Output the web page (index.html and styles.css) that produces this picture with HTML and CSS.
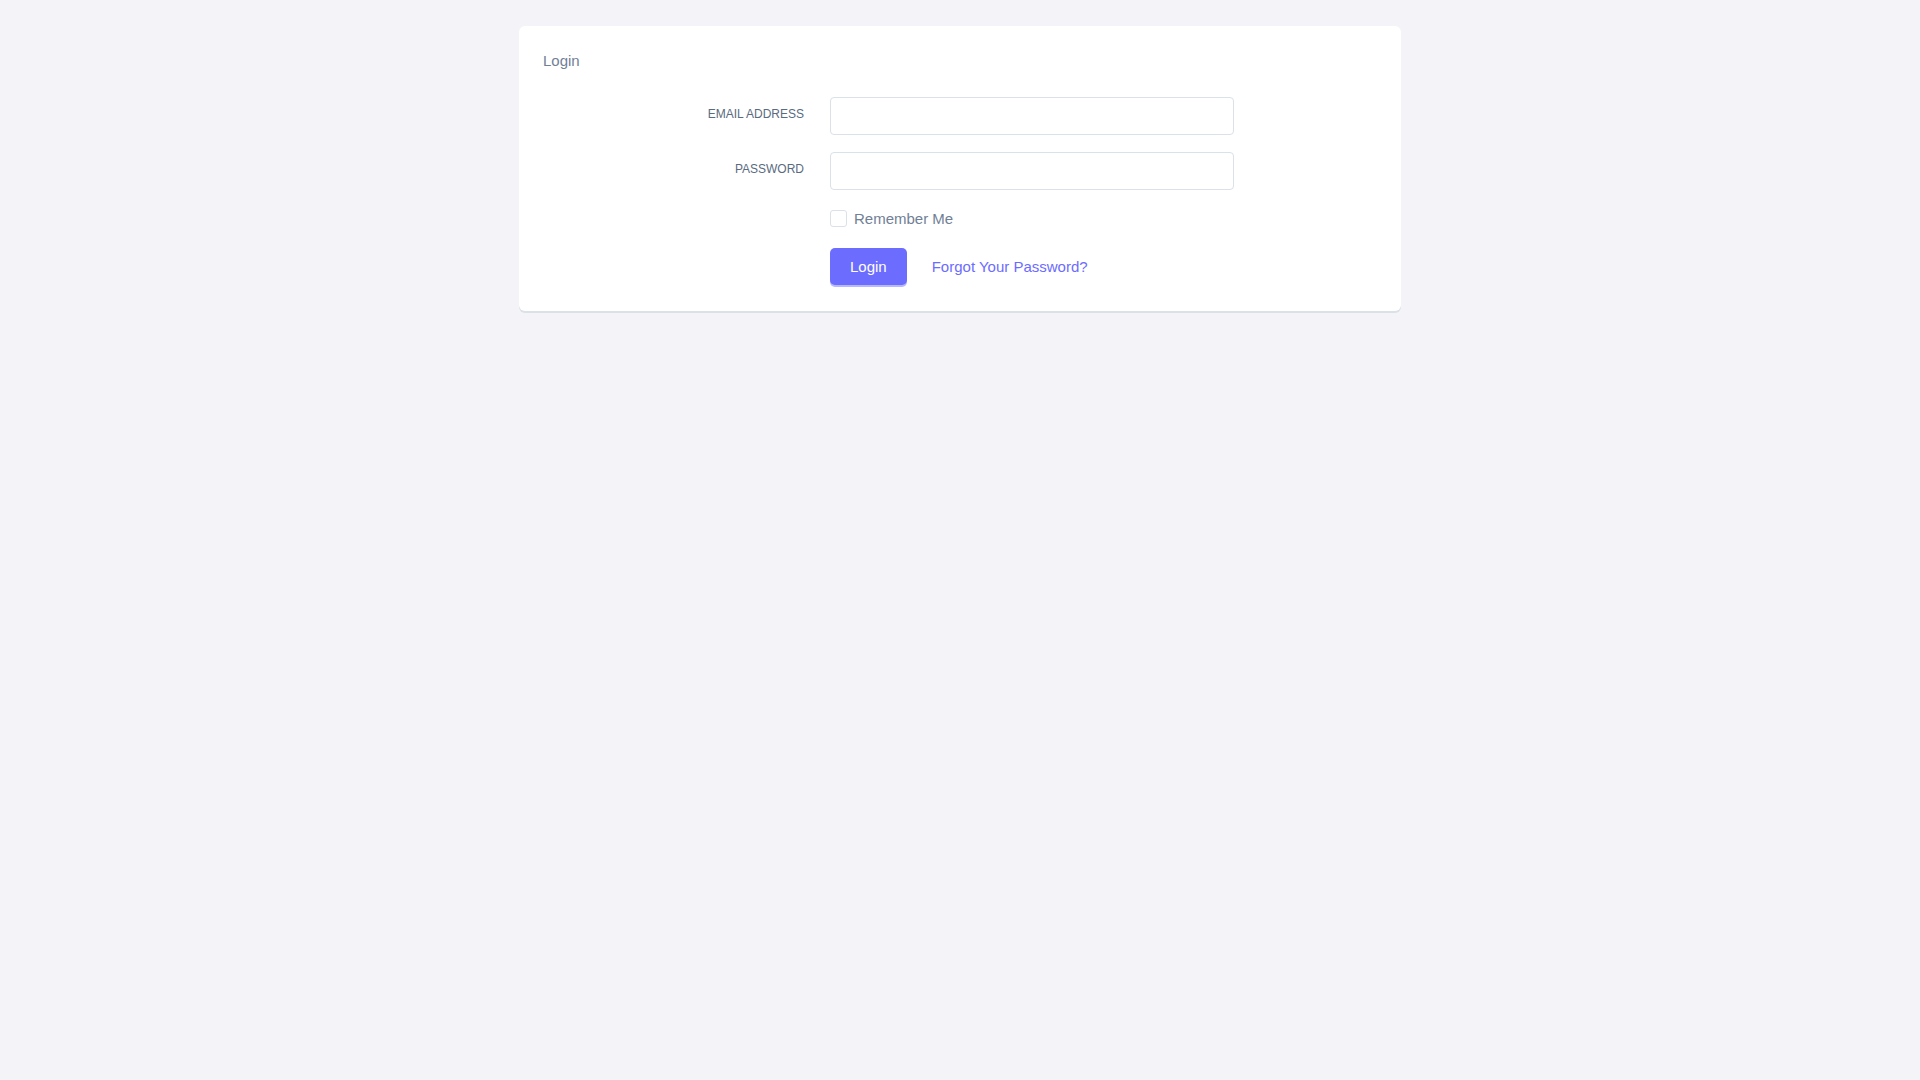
FILE: index.html
```html
<!DOCTYPE html>
<html lang="en">
<head>
<meta charset="utf-8">
<title>Login</title>
<link rel="stylesheet" href="styles.css">
</head>
<body>
<div class="card">
  <div class="card-header">Login</div>
  <form class="login-form">
    <div class="form-row field-row">
      <label class="field-label" for="email">Email Address</label>
      <input class="field-input" id="email" type="email">
    </div>
    <div class="form-row field-row">
      <label class="field-label" for="password">Password</label>
      <input class="field-input" id="password" type="password">
    </div>
    <div class="form-row check-row">
      <label class="remember">
        <span class="checkbox"></span>
        <span class="remember-text">Remember Me</span>
      </label>
    </div>
    <div class="form-row action-row">
      <div class="actions">
        <button class="btn" type="button">Login</button>
        <a class="forgot" href="#">Forgot Your Password?</a>
      </div>
    </div>
  </form>
</div>
</body>
</html>
```
FILE: styles.css
```css
html, body {
  margin: 0;
  padding: 0;
}
body {
  background: #f3f3f8;
  font-family: "Liberation Sans", Arial, Helvetica, sans-serif;
  min-height: 1080px;
}
.card {
  box-sizing: border-box;
  width: 882px;
  margin: 26px auto 0;
  background: #ffffff;
  border-radius: 6px;
  box-shadow: 0 2px 0 #dae1e7;
  padding: 24px 24px 24px;
}
.card-header {
  font-size: 15px;
  line-height: 22px;
  color: #718096;
}
.login-form {
  margin-top: 25px;
}
.form-row {
  display: grid;
  grid-template-columns: 261px 404px;
  column-gap: 26px;
}
.field-row {
  margin-bottom: 17px;
}
.field-label {
  grid-column: 1;
  text-align: right;
  text-transform: uppercase;
  font-size: 12px;
  line-height: 16px;
  padding-top: 9px;
  color: #5a6b80;
}
.field-input {
  grid-column: 2;
  box-sizing: border-box;
  width: 404px;
  height: 38px;
  margin: 0;
  border: 1px solid #dae1e7;
  border-radius: 4px;
  background: #ffffff;
  font-family: inherit;
  font-size: 15px;
  padding: 0 12px;
  outline: none;
}
.check-row {
  margin-top: 20px;
}
.remember {
  grid-column: 2;
  display: flex;
  align-items: center;
  gap: 7px;
  height: 17px;
}
.checkbox {
  box-sizing: border-box;
  width: 17px;
  height: 17px;
  border: 1px solid #dae1e7;
  border-radius: 3px;
  background: #ffffff;
}
.remember-text {
  font-size: 15px;
  line-height: 17px;
  color: #718096;
}
.action-row {
  margin-top: 21px;
}
.actions {
  grid-column: 2;
  display: flex;
  align-items: center;
  gap: 25px;
  padding-bottom: 2px;
}
.btn {
  height: 37px;
  padding: 0 20px;
  border: none;
  border-radius: 5px;
  background: #6c6cff;
  color: #ffffff;
  font-family: inherit;
  font-size: 15px;
  box-shadow: 0 2px 0 #b7b7ff;
  cursor: pointer;
}
.forgot {
  font-size: 15px;
  color: #6c6cff;
  text-decoration: none;
}
```
